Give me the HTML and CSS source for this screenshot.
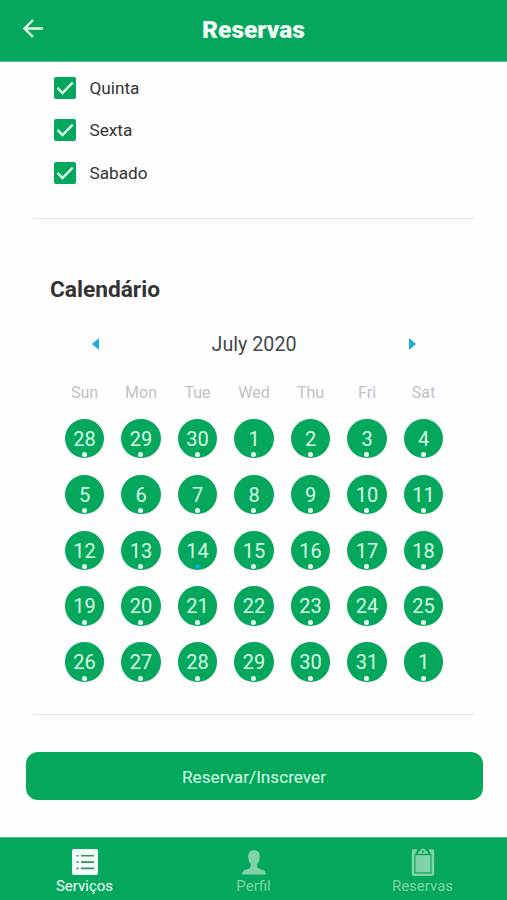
FILE: index.html
```
<!DOCTYPE html>
<html lang="pt-BR">
<head>
    <meta charset="UTF-8">
    <meta name="viewport" content="width=device-width, initial-scale=1.0">
    <title>Reservas</title>
    <link rel="stylesheet" href="styles.css">
</head>
<body>
    <header class="header">
        <a href="#" class="back-btn" aria-label="Voltar">
            <svg width="22" height="20" viewBox="0 0 22 20"><path d="M20.8 9.500H2.500M11 1L2.500 9.500l8.500 8.500"/></svg>
        </a>
        <h1>Reservas</h1>
    </header>

    <main class="content">
        <!-- Dias da semana -->
        <section class="weekday-list">
            <div class="check-item">
                <span class="checkbox"><svg width="22" height="22" viewBox="0 0 22 22"><path d="M3.5 10.8l5 5.2L18.7 5.6"/></svg></span>
                <span>Quinta</span>
            </div>
            <div class="check-item">
                <span class="checkbox"><svg width="22" height="22" viewBox="0 0 22 22"><path d="M3.5 10.8l5 5.2L18.7 5.6"/></svg></span>
                <span>Sexta</span>
            </div>
            <div class="check-item">
                <span class="checkbox"><svg width="22" height="22" viewBox="0 0 22 22"><path d="M3.5 10.8l5 5.2L18.7 5.6"/></svg></span>
                <span>Sabado</span>
            </div>
        </section>

        <!-- Calendário -->
        <section class="calendar-section">
            <h2>Calendário</h2>
            <div class="calendar">
                <div class="month-nav">
                    <svg width="7" height="12" viewBox="0 0 7 12"><path d="M7 0v12L0 6z"/></svg>
                    <span>July 2020</span>
                    <svg width="7" height="12" viewBox="0 0 7 12"><path d="M0 0v12l7-6z"/></svg>
                </div>
                <div class="week-names">
                    <span>Sun</span><span>Mon</span><span>Tue</span><span>Wed</span><span>Thu</span><span>Fri</span><span>Sat</span>
                </div>
                <div class="days">
                    <span class="day">28</span>
                    <span class="day">29</span>
                    <span class="day">30</span>
                    <span class="day">1</span>
                    <span class="day">2</span>
                    <span class="day">3</span>
                    <span class="day">4</span>
                    <span class="day">5</span>
                    <span class="day">6</span>
                    <span class="day">7</span>
                    <span class="day">8</span>
                    <span class="day">9</span>
                    <span class="day">10</span>
                    <span class="day">11</span>
                    <span class="day">12</span>
                    <span class="day">13</span>
                    <span class="day today">14</span>
                    <span class="day">15</span>
                    <span class="day">16</span>
                    <span class="day">17</span>
                    <span class="day">18</span>
                    <span class="day">19</span>
                    <span class="day">20</span>
                    <span class="day">21</span>
                    <span class="day">22</span>
                    <span class="day">23</span>
                    <span class="day">24</span>
                    <span class="day">25</span>
                    <span class="day">26</span>
                    <span class="day">27</span>
                    <span class="day">28</span>
                    <span class="day">29</span>
                    <span class="day">30</span>
                    <span class="day">31</span>
                    <span class="day">1</span>
                </div>
            </div>
        </section>

        <button type="button" class="reserve-btn">Reservar/Inscrever</button>
    </main>

    <nav class="tab-bar">
        <a href="#" class="tab active">
            <svg width="28" height="28" viewBox="0 0 28 28">
                <path fill="currentColor" d="M3 1h22a2 2 0 0 1 2 2v22a2 2 0 0 1-2 2H3a2 2 0 0 1-2-2V3a2 2 0 0 1 2-2z"/>
                <path class="list-lines" d="M5.5 7.8h2M10 7.8h13M5.5 14.1h2M10 14.1h13M5.5 20.4h2M10 20.4h13"/>
            </svg>
            <span>Serviços</span>
        </a>
        <a href="#" class="tab">
            <svg width="28" height="28" viewBox="0 0 28 28">
                <path fill="currentColor" d="M14 2.3c3.9 0 5.8 2.6 5.8 6.2 0 3.2-1 5.9-2.5 7.5-.5 3 .2 4.2 3 5.1 3.4 1 5.4 2 5.6 5.4H2.1c.2-3.4 2.2-4.4 5.6-5.4 2.800-.9 3.500-2.100 3-5.100-1.500-1.600-2.500-4.300-2.500-7.500 0-3.600 1.900-6.200 5.800-6.200z"/>
            </svg>
            <span>Perfil</span>
        </a>
        <a href="#" class="tab">
            <svg width="28" height="28" viewBox="0 0 28 28">
                <path fill="currentColor" fill-rule="evenodd" d="M4.500 1.300h4L6 6.300h16l-2.500-5h4a1.700 1.700 0 0 1 1.700 1.700v23a2 2 0 0 1-2 2H4.800a2 2 0 0 1-2-2V3a1.700 1.700 0 0 1 1.700-1.700zM5.400 6.300v19.100h17.200V6.300z"/>
                <path fill="currentColor" fill-rule="evenodd" d="M8.600 5.800c.6-2 1.500-2.500 2.700-2.700C11.700 1.500 12.500.6 14 .6s2.300.9 2.700 2.500c1.200.2 2.100.7 2.700 2.700zM14 2.500a1.100 1.100 0 1 0 0 2.200 1.100 1.100 0 0 0 0-2.200z"/>
                <path fill="currentColor" d="M6.500 7.200h15V24.300h-15z"/>
            </svg>
            <span>Reservas</span>
        </a>
    </nav>
</body>
</html>
```

FILE: styles.css
```
* {
    box-sizing: border-box;
}

body {
    display: flex;
    flex-direction: column;
    height: 900px;
    margin: 0;
    background-color: #fefefe;
    color: #333;
    font-family: Roboto, sans-serif;
    overflow: hidden;
}

.header {
    display: grid;
    grid-template-columns: 60px 1fr 60px;
    align-items: center;
    height: 62px;
    padding-bottom: 3px;
    background-color: #04a75b;
    border-bottom: 1px solid #55c08c;
}

.back-btn {
    display: flex;
    padding-left: 22px;
}

.back-btn svg {
    fill: none;
    stroke: #e8fff0;
    stroke-width: 2.4;
}

h1 {
    margin: 0;
    color: #f2fff7;
    font-size: 24.500px;
    font-weight: 900;
    text-align: center;
}

.content {
    display: flex;
    flex: 1;
    flex-direction: column;
}

.weekday-list {
    display: flex;
    flex-direction: column;
    gap: 20.3px;
    height: 157px;
    margin: 0 33px;
    padding: 15px 20.5px 0;
    border-bottom: 1px solid #e6e6e6;
}

.check-item {
    display: flex;
    align-items: center;
    gap: 14px;
    height: 22px;
    font-size: 17.2px;
    line-height: 24px;
}

.checkbox {
    display: flex;
    width: 22px;
    height: 22px;
    border-radius: 2px;
    background-color: #04a75b;
}

.checkbox svg {
    fill: none;
    stroke: #d9ffe8;
    stroke-width: 2.4;
}

.calendar-section {
    height: 496px;
    margin: 0 33px;
    padding-top: 57px;
    border-bottom: 1px solid #e6e6e6;
}

h2 {
    margin: 0 0 0 17px;
    font-size: 22.700px;
    font-weight: 700;
    line-height: 28px;
}

.calendar {
    width: 395.5px;
    margin: 0 auto 0 23.3px;
}

.month-nav {
    display: flex;
    justify-content: space-between;
    align-items: center;
    height: 28px;
    margin-top: 26px;
    padding: 0 36px;
    color: #43484d;
    font-size: 19.700px;
}

.month-nav svg {
    fill: #18aed6;
}

.week-names {
    display: grid;
    grid-template-columns: repeat(7, 1fr);
    margin-top: 24px;
    color: #bcc3c9;
    font-size: 16px;
    line-height: 22px;
    text-align: center;
}

.days {
    display: grid;
    grid-template-columns: repeat(7, 1fr);
    justify-items: center;
    row-gap: 16.4px;
    margin-top: 15px;
}

.day {
    position: relative;
    width: 39.4px;
    height: 39.4px;
    border-radius: 50%;
    background-color: #04a75b;
    color: #d4fbe4;
    font-size: 20px;
    line-height: 40px;
    text-align: center;
}

.day::after {
    content: "";
    position: absolute;
    bottom: 1px;
    left: 17px;
    width: 5px;
    height: 5px;
    border-radius: 50%;
    background-color: #e8fff2;
}

.today::after {
    background-color: #08b0c8;
}

.reserve-btn {
    height: 48px;
    margin: 37px 24.5px 0 25.5px;
    padding-top: 3px;
    border: none;
    border-radius: 12px;
    background-color: #04a75b;
    color: #d9ffe8;
    font-family: inherit;
    font-size: 17.2px;
}

.tab-bar {
    display: flex;
    height: 63px;
    border-top: 1px solid #55c08c;
    background-color: #04a75b;
}

.tab {
    display: flex;
    flex: 1;
    flex-direction: column;
    align-items: center;
    padding-top: 10px;
    color: #80d3a9;
    font-size: 15px;
    line-height: 20px;
    text-decoration: none;
}

.tab.active {
    color: #f4fff9;
}

.list-lines {
    fill: none;
    stroke: #368f66;
    stroke-width: 1.6;
}
```
